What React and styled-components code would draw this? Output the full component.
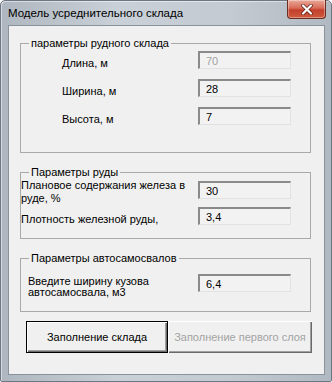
import styled, { createGlobalStyle } from 'styled-components'

const GlobalStyle = createGlobalStyle`
  html, body {
    margin: 0;
    padding: 0;
    background: #ffffff;
  }
  body {
    font-family: "Liberation Sans", Arial, sans-serif;
  }
`

const Window = styled.div`
  width: 332px;
  height: 382px;
  box-sizing: border-box;
  display: flex;
  flex-direction: column;
  padding: 0 6px 6px 7px;
  border: 1px solid #6d7783;
  border-radius: 5px 5px 2px 2px;
  background: linear-gradient(to right, #aeb6bf 0%, #c9d0d7 35%, #c3cad2 70%, #b0b8c1 100%);
  box-shadow: inset 1px 1px 0 rgba(255, 255, 255, 0.5);
`

const TitleBar = styled.div`
  height: 25px;
  display: flex;
  justify-content: space-between;
  align-items: flex-start;
  margin-top: -1px;
  margin-right: -1px;
`

const Title = styled.span`
  font-size: 11.5px;
  line-height: 16px;
  color: #000;
  padding: 5px 0 0 0;
`

const CloseButton = styled.div`
  width: 39px;
  height: 19px;
  box-sizing: border-box;
  display: flex;
  align-items: center;
  justify-content: center;
  border: 1px solid #6b2c22;
  border-top: none;
  border-radius: 0 0 4px 4px;
  background: linear-gradient(to bottom, #e9a999 0%, #d86b58 45%, #c4402c 55%, #cf5a3f 100%);
  box-shadow: inset 0 0 0 1px rgba(255, 255, 255, 0.35);
`

const Client = styled.div`
  flex: 1;
  display: flex;
  flex-direction: column;
  background: #f0f0f0;
  border: 1px solid #8a939d;
  padding: 11px 0 0 11px;
`

const Group = styled.fieldset`
  width: 291px;
  box-sizing: border-box;
  margin: 0 0 ${({ $gap }) => $gap}px 0;
  padding: 0;
  min-width: 0;
  border: 1px solid #a9a9a9;
`

const Legend = styled.legend`
  margin-left: 8px;
  padding: 0 2px;
  font-size: 11px;
  line-height: 13px;
  color: #000;
`

const Rows = styled.div`
  display: flex;
  flex-direction: column;
  gap: ${({ $gap }) => $gap}px;
  padding: ${({ $top }) => $top}px 0 ${({ $bottom }) => $bottom}px ${({ $left }) => $left}px;
`

const Row = styled.div`
  display: flex;
  align-items: flex-start;
`

const Label = styled.div`
  width: ${({ $width }) => $width}px;
  margin-top: ${({ $offset }) => $offset}px;
  font-size: 11px;
  line-height: ${({ $lh }) => $lh || 13}px;
  color: #000;
`

const Field = styled.input`
  width: 93px;
  height: 18px;
  box-sizing: border-box;
  margin: ${({ $offset }) => $offset || 0}px 0 0 0;
  padding: 0 0 0 6px;
  border-style: solid;
  border-width: 2px 1px 1px 2px;
  border-color: #8a8a8a #e2e2e2 #e2e2e2 #8a8a8a;
  background: #f2f2f2;
  font-family: "Liberation Sans", Arial, sans-serif;
  font-size: 11px;
  line-height: 14px;
  color: ${({ $muted }) => ($muted ? '#a3a3a3' : '#000')};
  outline: none;
`

const ButtonRow = styled.div`
  display: flex;
  padding-left: 6px;
`

const Button = styled.button`
  width: ${({ $width }) => $width}px;
  height: 32px;
  box-sizing: border-box;
  padding: 0;
  background: #f0f0f0;
  font-family: "Liberation Sans", Arial, sans-serif;
  font-size: 11px;
  color: ${({ $disabled }) => ($disabled ? '#a3a3a3' : '#000')};
  border: ${({ $default }) => ($default ? '1px solid #000' : 'none')};
  box-shadow: inset 1px 1px 0 #ffffff, inset -1px -1px 0 #696969,
    inset -2px -2px 0 #a0a0a0;
`

function CloseIcon() {
  return (
    <svg width="14" height="11" viewBox="0 0 14 11">
      <path d="M3 1.5 L11 9.5 M11 1.5 L3 9.5" stroke="#5a1d14" strokeWidth="3.6" strokeLinecap="round" />
      <path d="M3 1.5 L11 9.5 M11 1.5 L3 9.5" stroke="#ffffff" strokeWidth="2.2" strokeLinecap="round" />
    </svg>
  )
}

function App() {
  return (
    <>
      <GlobalStyle />
      <Window>
        <TitleBar>
          <Title>Модель усреднительного склада</Title>
          <CloseButton>
            <CloseIcon />
          </CloseButton>
        </TitleBar>
        <Client>
          <Group $gap={13}>
            <Legend>параметры рудного склада</Legend>
            <Rows $gap={9} $top={1} $bottom={26} $left={41}>
              <Row>
                <Label $width={136} $offset={6}>Длина, м</Label>
                <Field readOnly defaultValue="70" $muted />
              </Row>
              <Row>
                <Label $width={136} $offset={6}>Ширина, м</Label>
                <Field readOnly defaultValue="28" />
              </Row>
              <Row>
                <Label $width={136} $offset={6}>Высота, м</Label>
                <Field readOnly defaultValue="7" />
              </Row>
            </Rows>
          </Group>

          <Group $gap={13}>
            <Legend>Параметры руды</Legend>
            <Rows $gap={2} $top={0} $bottom={12} $left={0}>
              <Row>
                <Label $width={177} $offset={0}>
                  Плановое содержания железа в руде, %
                </Label>
                <Field readOnly defaultValue="30" $offset={2} />
              </Row>
              <Row>
                <Label $width={177} $offset={6}>Плотность железной руды,</Label>
                <Field readOnly defaultValue="3,4" />
              </Row>
            </Rows>
          </Group>

          <Group $gap={9}>
            <Legend>Параметры автосамосвалов</Legend>
            <Rows $gap={0} $top={0} $bottom={13} $left={7}>
              <Row>
                <Label $width={170} $offset={11} $lh={11}>
                  Введите ширину кузова автосамосвала, м3
                </Label>
                <Field readOnly defaultValue="6,4" $offset={9} />
              </Row>
            </Rows>
          </Group>

          <ButtonRow>
            <Button $width={142} $default>Заполнение склада</Button>
            <Button $width={144} $disabled>Заполнение первого слоя</Button>
          </ButtonRow>
        </Client>
      </Window>
    </>
  )
}

export default App
